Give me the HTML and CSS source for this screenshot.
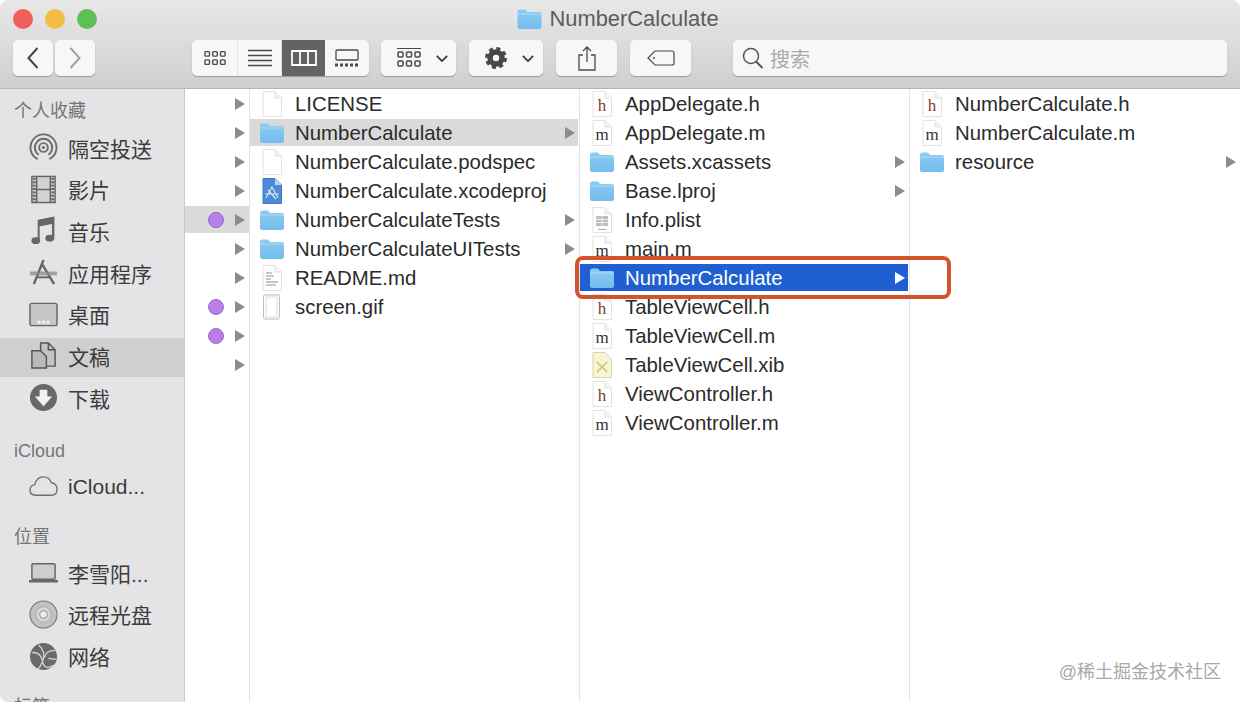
FILE: index.html
```html
<!DOCTYPE html>
<html lang="zh-CN">
<head>
    <meta charset="UTF-8">
    <title>NumberCalculate</title>
    <link rel="stylesheet" href="styles.css">
</head>
<body>
    <svg class="sprites" width="0" height="0">
        <defs>
            <linearGradient id="folderFill" x1="0" y1="0" x2="0" y2="1">
                <stop offset="0" stop-color="#8ccbf3"/>
                <stop offset="1" stop-color="#74bdec"/>
            </linearGradient>
            <symbol id="i-folder" viewBox="0 0 24 20">
                <path d="M0 3Q0 .5 2.500 .5H8L10 3H22Q24 3 24 5V18Q24 20 22 20H2Q0 20 0 18Z" fill="url(#folderFill)"/>
                <path d="M0 5H24" stroke="#a9dcfa" stroke-width="1"/>
            </symbol>
            <symbol id="i-page" viewBox="0 0 20 26">
                <path d="M1 .5H13L19.500 7V25.500H1Z" fill="#fff" stroke="#e2e2e2"/>
                <path d="M13 .5V7H19.500" fill="#f3f3f3" stroke="#e2e2e2"/>
            </symbol>
            <symbol id="i-hfile" viewBox="0 0 20 26">
                <use href="#i-page" width="20" height="26"/>
                <text class="code-letter code-h" x="10" y="20">h</text>
            </symbol>
            <symbol id="i-mfile" viewBox="0 0 20 26">
                <use href="#i-page" width="20" height="26"/>
                <text class="code-letter" x="10" y="20">m</text>
            </symbol>
            <symbol id="i-readme" viewBox="0 0 20 26">
                <use href="#i-page" width="20" height="26"/>
                <path d="M4 8H10M4 11H12M4 14H9M4 17H16M4 20H14" stroke="#8d8d8d" stroke-width="1"/>
            </symbol>
            <symbol id="i-gif" viewBox="0 0 20 26">
                <rect x="1.500" y="1" width="16" height="24" rx="1.500" fill="#fff" stroke="#bdbdbd"/>
                <rect x="4" y="3" width="11" height="20" fill="#fff" stroke="#dcdcdc"/>
            </symbol>
            <symbol id="i-plist" viewBox="0 0 20 26">
                <use href="#i-page" width="20" height="26"/>
                <rect x="4" y="9" width="12" height="10" fill="#bdbdbd"/>
                <path d="M4 12.500H16M4 15.500H16M10 9V19" stroke="#eee"/>
                <path d="M6 22.500H14" stroke="#aaa"/>
            </symbol>
            <symbol id="i-xib" viewBox="0 0 20 26">
                <path d="M1 .5H13L19.500 7V25.500H1Z" fill="#f7f5d8" stroke="#d9d7a8"/>
                <path d="M5 10L15 20M15 10L5 20" stroke="#c9bf52" stroke-width="1.300"/>
            </symbol>
            <symbol id="i-xcode" viewBox="0 0 20 26">
                <path d="M1 .5H13L19.500 7V25.500H1Z" fill="#4d8ad6" stroke="#3f78c2"/>
                <path d="M13 .5V7H19.500" fill="#bcd6f2"/>
                <path d="M4 20L10 9L16 20M3 16H17M6 12L14 21" fill="none" stroke="#d6e6f8" stroke-width="1.200"/>
            </symbol>
            <symbol id="i-arrow" viewBox="0 0 10 12">
                <path d="M0 0L10 6L0 12Z"/>
            </symbol>
            <symbol id="i-chevron" viewBox="0 0 14 8">
                <path d="M1 1L7 7L13 1" fill="none" stroke="#3e3e3e" stroke-width="2.200"/>
            </symbol>
            <symbol id="i-grid" viewBox="0 0 24 16">
                <g fill="none" stroke="#4a4a4a" stroke-width="1.500">
                    <rect x="1" y="1" width="5" height="5" rx="1"/><rect x="9.500" y="1" width="5" height="5" rx="1"/><rect x="18" y="1" width="5" height="5" rx="1"/>
                    <rect x="1" y="10" width="5" height="5" rx="1"/><rect x="9.500" y="10" width="5" height="5" rx="1"/><rect x="18" y="10" width="5" height="5" rx="1"/>
                </g>
            </symbol>
        </defs>
    </svg>

    <div class="window">
        <header class="titlebar">
            <div class="title-row">
                <div class="lights">
                    <span class="light light-red"></span>
                    <span class="light light-yellow"></span>
                    <span class="light light-green"></span>
                </div>
                <div class="title">
                    <svg class="title-icon"><use href="#i-folder"/></svg>
                    <span>NumberCalculate</span>
                </div>
            </div>
            <div class="toolbar">
                <div class="nav-group">
                    <button class="tool nav-btn">
                        <svg width="12" height="22" viewBox="0 0 12 22"><path d="M10.500 1L1.500 11L10.500 21" fill="none" stroke="#444" stroke-width="2"/></svg>
                    </button>
                    <button class="tool nav-btn">
                        <svg width="12" height="22" viewBox="0 0 12 22"><path d="M1.500 1L10.500 11L1.500 21" fill="none" stroke="#a0a0a0" stroke-width="2"/></svg>
                    </button>
                </div>
                <div class="view-group">
                    <button class="view-btn">
                        <svg width="22" height="16"><use href="#i-grid"/></svg>
                    </button>
                    <button class="view-btn">
                        <svg width="24" height="18" viewBox="0 0 24 18"><path d="M0 1.500H24M0 6.500H24M0 11.500H24M0 16.500H24" stroke="#4a4a4a" stroke-width="1.300"/></svg>
                    </button>
                    <button class="view-btn view-active">
                        <svg width="26" height="16" viewBox="0 0 26 16"><path d="M1 1H25V15H1ZM9 1V15M17 1V15" fill="none" stroke="#fff" stroke-width="1.800"/></svg>
                    </button>
                    <button class="view-btn">
                        <svg width="24" height="18" viewBox="0 0 24 18"><rect x="1" y="1" width="22" height="10" rx="1" fill="none" stroke="#4a4a4a" stroke-width="1.300"/><path d="M0 16H24" stroke="#4a4a4a" stroke-width="3" stroke-dasharray="3 2"/></svg>
                    </button>
                </div>
                <button class="tool arrange-btn">
                    <svg width="24" height="20" viewBox="0 0 24 20"><path d="M0 .5H24" stroke="#4a4a4a"/><use href="#i-grid" y="3" width="24" height="16"/></svg>
                    <svg width="12" height="7"><use href="#i-chevron"/></svg>
                </button>
                <button class="tool gear-btn">
                    <svg width="22" height="22" viewBox="0 0 24 24"><circle cx="12" cy="12" r="6.500" fill="none" stroke="#484848" stroke-width="6"/><circle cx="12" cy="12" r="10" fill="none" stroke="#484848" stroke-width="4" stroke-dasharray="4.300 3.550"/></svg>
                    <svg width="12" height="7"><use href="#i-chevron"/></svg>
                </button>
                <button class="tool share-btn">
                    <svg width="20" height="25" viewBox="0 0 20 25"><path d="M6 9H2V24H18V9H14M10 16V1.500M6 5L10 1L14 5" fill="none" stroke="#4a4a4a" stroke-width="1.300"/></svg>
                </button>
                <button class="tool tag-btn">
                    <svg width="28" height="16" viewBox="0 0 28 16"><path d="M8 1H25Q27 1 27 3V13Q27 15 25 15H8L1 8Z" fill="none" stroke="#4a4a4a" stroke-width="1.200"/><circle cx="7" cy="8" r="1" fill="#4a4a4a"/></svg>
                </button>
                <div class="search">
                    <svg width="22" height="22" viewBox="0 0 22 22"><circle cx="9" cy="9" r="7.500" fill="none" stroke="#555" stroke-width="1.500"/><path d="M14 14.500L20.500 21" stroke="#555" stroke-width="2"/></svg>
                    <span>搜索</span>
                </div>
            </div>
        </header>

        <main class="content">
            <nav class="sidebar">
                <h4 class="side-title">个人收藏</h4>
                <ul class="side-list">
                    <li class="side-item">
                        <svg class="side-icon" viewBox="0 0 30 30"><g fill="none" stroke="#6e6e6e" stroke-width="2"><path d="M9 27A13.500 13.500 0 1 1 21 27"/><path d="M10 22.500A9 9 0 1 1 20 22.500"/><circle cx="15" cy="15" r="4.500"/></g><circle cx="15" cy="15" r="1.600" fill="#6e6e6e"/></svg>
                        隔空投送
                    </li>
                    <li class="side-item">
                        <svg class="side-icon" viewBox="0 0 30 30"><rect x="3" y="1.500" width="24" height="27" fill="#d2d2d2" stroke="#666" stroke-width="1.500"/><path d="M8 2V28M22 2V28M8 15H22" stroke="#666" stroke-width="1.500"/><path d="M5.500 3V28M24.500 3V28" stroke="#666" stroke-width="3" stroke-dasharray="2 1.500"/></svg>
                        影片
                    </li>
                    <li class="side-item">
                        <svg class="side-icon" viewBox="0 0 30 30"><path d="M10 5L25 2V22.500" fill="none" stroke="#666" stroke-width="2.500"/><path d="M10 5V26M10 5L25 2V7L10 10Z" fill="#666" stroke="#666" stroke-width="2"/><ellipse cx="7" cy="25.500" rx="4.500" ry="3.500" fill="#666"/><ellipse cx="21.500" cy="23" rx="4.500" ry="3.500" fill="#666"/></svg>
                        音乐
                    </li>
                    <li class="side-item">
                        <svg class="side-icon" viewBox="0 0 30 30"><path d="M15 2L5 27M14 7L26 27" fill="none" stroke="#666" stroke-width="2.500"/><path d="M1 14H29V18H1Z" fill="#8a8a8a" opacity=".75"/><path d="M9 20H21" stroke="#666" stroke-width="2"/></svg>
                        应用程序
                    </li>
                    <li class="side-item">
                        <svg class="side-icon" viewBox="0 0 30 30"><rect x="1" y="3.500" width="28" height="23" rx="2" fill="#c6c6c6" stroke="#666" stroke-width="1.500"/><path d="M9 23H21" stroke="#f2f2f2" stroke-width="3" stroke-dasharray="3 1.500"/></svg>
                        桌面
                    </li>
                    <li class="side-item side-active">
                        <svg class="side-icon" viewBox="0 0 30 30"><path d="M12 2H20L27 9V26H12Z" fill="#c4c4c4" stroke="#555" stroke-width="1.500"/><path d="M20 2V9H27" fill="none" stroke="#555" stroke-width="1.500"/><path d="M3 10H12L18 16V28H3Z" fill="#b9b9b9" stroke="#555" stroke-width="1.500"/></svg>
                        文稿
                    </li>
                    <li class="side-item">
                        <svg class="side-icon" viewBox="0 0 30 30"><circle cx="15" cy="15" r="14" fill="#696969"/><path d="M11 7H19V14H24L15 24L6 14H11Z" fill="#f2f2f2"/></svg>
                        下载
                    </li>
                </ul>

                <h4 class="side-title side-title-icloud">iCloud</h4>
                <ul class="side-list">
                    <li class="side-item">
                        <svg class="side-icon" viewBox="0 0 30 30"><path d="M7 24Q1 24 1 18.500Q1 14 6 13Q8 5 15 5Q21 5 23 11Q29 12 29 18Q29 24 23 24Z" fill="none" stroke="#6e6e6e" stroke-width="1.400"/></svg>
                        iCloud...
                    </li>
                </ul>

                <h4 class="side-title">位置</h4>
                <ul class="side-list">
                    <li class="side-item">
                        <svg class="side-icon" viewBox="0 0 30 30"><rect x="3" y="6" width="24" height="16" rx="1" fill="#cdcdcd" stroke="#666" stroke-width="1.500"/><path d="M0 24H30" stroke="#666" stroke-width="2.500"/></svg>
                        李雪阳...
                    </li>
                    <li class="side-item">
                        <svg class="side-icon" viewBox="0 0 30 30"><circle cx="15" cy="15" r="14" fill="#c2c2c2" stroke="#7a7a7a" stroke-width="1.200"/><circle cx="15" cy="15" r="8" fill="#d6d6d6" stroke="#a8a8a8"/><circle cx="15" cy="15" r="4" fill="#ececec" stroke="#8a8a8a"/></svg>
                        远程光盘
                    </li>
                    <li class="side-item">
                        <svg class="side-icon" viewBox="0 0 30 30"><circle cx="15" cy="15" r="14" fill="#6a6a6a"/><path d="M3 11Q12 10 14 20T26 24M10 3Q18 10 14 20T8 27M27 9Q18 8 16 16M20 17L28 18" fill="none" stroke="#d2d2d2" stroke-width="1.400"/></svg>
                        网络
                    </li>
                </ul>

                <h4 class="side-title">标签</h4>
            </nav>

            <section class="column column-narrow">
                <div class="row"><svg class="row-arrow"><use href="#i-arrow"/></svg></div>
                <div class="row"><svg class="row-arrow"><use href="#i-arrow"/></svg></div>
                <div class="row"><svg class="row-arrow"><use href="#i-arrow"/></svg></div>
                <div class="row"><svg class="row-arrow"><use href="#i-arrow"/></svg></div>
                <div class="row row-grey"><span class="dot"></span><svg class="row-arrow"><use href="#i-arrow"/></svg></div>
                <div class="row"><svg class="row-arrow"><use href="#i-arrow"/></svg></div>
                <div class="row"><svg class="row-arrow"><use href="#i-arrow"/></svg></div>
                <div class="row"><span class="dot"></span><svg class="row-arrow"><use href="#i-arrow"/></svg></div>
                <div class="row"><span class="dot"></span><svg class="row-arrow"><use href="#i-arrow"/></svg></div>
                <div class="row"><svg class="row-arrow"><use href="#i-arrow"/></svg></div>
            </section>

            <section class="column">
                <div class="row"><span class="row-icon"><svg class="file-icon"><use href="#i-page"/></svg></span><span class="row-name">LICENSE</span></div>
                <div class="row row-grey"><span class="row-icon"><svg class="folder-icon"><use href="#i-folder"/></svg></span><span class="row-name">NumberCalculate</span><svg class="row-arrow"><use href="#i-arrow"/></svg></div>
                <div class="row"><span class="row-icon"><svg class="file-icon"><use href="#i-page"/></svg></span><span class="row-name">NumberCalculate.podspec</span></div>
                <div class="row"><span class="row-icon"><svg class="file-icon"><use href="#i-xcode"/></svg></span><span class="row-name">NumberCalculate.xcodeproj</span></div>
                <div class="row"><span class="row-icon"><svg class="folder-icon"><use href="#i-folder"/></svg></span><span class="row-name">NumberCalculateTests</span><svg class="row-arrow"><use href="#i-arrow"/></svg></div>
                <div class="row"><span class="row-icon"><svg class="folder-icon"><use href="#i-folder"/></svg></span><span class="row-name">NumberCalculateUITests</span><svg class="row-arrow"><use href="#i-arrow"/></svg></div>
                <div class="row"><span class="row-icon"><svg class="file-icon"><use href="#i-readme"/></svg></span><span class="row-name">README.md</span></div>
                <div class="row"><span class="row-icon"><svg class="file-icon"><use href="#i-gif"/></svg></span><span class="row-name">screen.gif</span></div>
            </section>

            <section class="column">
                <div class="row"><span class="row-icon"><svg class="file-icon"><use href="#i-hfile"/></svg></span><span class="row-name">AppDelegate.h</span></div>
                <div class="row"><span class="row-icon"><svg class="file-icon"><use href="#i-mfile"/></svg></span><span class="row-name">AppDelegate.m</span></div>
                <div class="row"><span class="row-icon"><svg class="folder-icon"><use href="#i-folder"/></svg></span><span class="row-name">Assets.xcassets</span><svg class="row-arrow"><use href="#i-arrow"/></svg></div>
                <div class="row"><span class="row-icon"><svg class="folder-icon"><use href="#i-folder"/></svg></span><span class="row-name">Base.lproj</span><svg class="row-arrow"><use href="#i-arrow"/></svg></div>
                <div class="row"><span class="row-icon"><svg class="file-icon"><use href="#i-plist"/></svg></span><span class="row-name">Info.plist</span></div>
                <div class="row"><span class="row-icon"><svg class="file-icon"><use href="#i-mfile"/></svg></span><span class="row-name">main.m</span></div>
                <div class="row row-blue"><span class="row-icon"><svg class="folder-icon"><use href="#i-folder"/></svg></span><span class="row-name">NumberCalculate</span><svg class="row-arrow"><use href="#i-arrow"/></svg></div>
                <div class="row"><span class="row-icon"><svg class="file-icon"><use href="#i-hfile"/></svg></span><span class="row-name">TableViewCell.h</span></div>
                <div class="row"><span class="row-icon"><svg class="file-icon"><use href="#i-mfile"/></svg></span><span class="row-name">TableViewCell.m</span></div>
                <div class="row"><span class="row-icon"><svg class="file-icon"><use href="#i-xib"/></svg></span><span class="row-name">TableViewCell.xib</span></div>
                <div class="row"><span class="row-icon"><svg class="file-icon"><use href="#i-hfile"/></svg></span><span class="row-name">ViewController.h</span></div>
                <div class="row"><span class="row-icon"><svg class="file-icon"><use href="#i-mfile"/></svg></span><span class="row-name">ViewController.m</span></div>
            </section>

            <section class="column column-last">
                <div class="row"><span class="row-icon"><svg class="file-icon"><use href="#i-hfile"/></svg></span><span class="row-name">NumberCalculate.h</span></div>
                <div class="row"><span class="row-icon"><svg class="file-icon"><use href="#i-mfile"/></svg></span><span class="row-name">NumberCalculate.m</span></div>
                <div class="row"><span class="row-icon"><svg class="folder-icon"><use href="#i-folder"/></svg></span><span class="row-name">resource</span><svg class="row-arrow"><use href="#i-arrow"/></svg></div>
            </section>

            <div class="callout"></div>
            <div class="watermark">@稀土掘金技术社区</div>
        </main>
    </div>
</body>
</html>
```

FILE: styles.css
```css
* {
    box-sizing: border-box;
}
body {
    margin: 0;
    background: #fff;
    font-family: "Liberation Sans", "Noto Sans CJK SC", sans-serif;
    overflow: hidden;
}
.sprites {
    position: absolute;
}
.window {
    width: 1240px;
    height: 702px;
    display: flex;
    flex-direction: column;
    border-radius: 8px;
    overflow: hidden;
    background: #fff;
}

/* title bar + toolbar */
.titlebar {
    height: 89px;
    flex: none;
    background: linear-gradient(#e8e8e8, #cfcfcf);
    border-bottom: 1px solid #b4b4b4;
}
.title-row {
    height: 40px;
    display: grid;
    grid-template-columns: 1fr auto 1fr;
    align-items: center;
    padding: 0 17px 3px 13px;
}
.lights {
    display: flex;
    gap: 12px;
}
.light {
    width: 20px;
    height: 20px;
    border-radius: 50%;
}
.light-red {
    background: #f0605a;
}
.light-yellow {
    background: #f4bc42;
}
.light-green {
    background: #5cc052;
}
.title {
    grid-column: 2;
    display: flex;
    align-items: center;
    gap: 7px;
    font-size: 21.9px;
    color: #5c5c5c;
}
.title-icon {
    width: 25px;
    height: 20px;
}
.toolbar {
    display: flex;
    align-items: stretch;
    height: 36px;
    padding: 0 13px;
}
.tool, .view-group, .search {
    background: #f7f7f7;
    border-radius: 5px;
    box-shadow: 0 1px 1px rgba(0,0,0,0.28);
}
button {
    border: none;
    padding: 0;
    display: flex;
    align-items: center;
    justify-content: center;
}
.nav-group {
    display: flex;
    gap: 2px;
    margin-right: 97px;
}
.nav-btn {
    width: 40px;
}
.view-group {
    display: flex;
    width: 177px;
    overflow: hidden;
}
.view-btn {
    width: 44px;
    background: none;
    border-right: 1px solid #e2e2e2;
}
.view-btn:first-child {
    width: 46px;
}
.view-btn:last-child {
    border-right: none;
}
.view-active {
    background: #636363;
    border-right: none;
    width: 43px;
}
.arrange-btn {
    width: 75px;
    margin-left: 12px;
    justify-content: flex-start;
    padding-left: 16px;
    gap: 15px;
}
.gear-btn {
    width: 74px;
    margin-left: 13px;
    justify-content: flex-start;
    padding-left: 16px;
    gap: 15px;
}
.share-btn {
    width: 61px;
    margin-left: 13px;
}
.tag-btn {
    width: 61px;
    margin-left: 13px;
}
.search {
    flex: 1;
    margin-left: 42px;
    display: flex;
    align-items: center;
    gap: 6px;
    padding-left: 9px;
    font-size: 20px;
    color: #a9a9a9;
}

/* main area */
.content {
    flex: 1;
    display: flex;
    min-height: 0;
    position: relative;
}
.sidebar {
    width: 185px;
    flex: none;
    padding-top: 10px;
    background: #e4e4e6;
    border-right: 1px solid #c9c9c9;
    overflow: hidden;
}
.side-title {
    margin: 17px 0 6px 14px;
    height: 24px;
    line-height: 24px;
    font-size: 18px;
    font-weight: normal;
    color: #757575;
}
.side-title:first-child {
    margin-top: 0;
    margin-bottom: 7px;
}
.side-title-icloud {
    margin-top: 20px;
    margin-bottom: 6px;
}
.side-list {
    list-style: none;
    margin: 0;
    padding: 0;
    display: flex;
    flex-direction: column;
    gap: 2.7px;
}
.side-item {
    height: 39px;
    display: flex;
    align-items: center;
    gap: 10px;
    padding: 0 0 4px 29px;
    font-size: 21px;
    color: #3c3c3c;
}
.side-active {
    background: #cfcfd1;
}
.side-icon {
    width: 29px;
    height: 29px;
}

/* file columns */
.column {
    width: 330px;
    flex: none;
    padding-top: 1px;
    border-left: 1px solid #e4e4e4;
}
.column-narrow {
    width: 64px;
    border-left: none;
}
.column-last {
    flex: 1;
}
.row {
    height: 27px;
    margin: 0 1px 2px 0;
    display: flex;
    align-items: center;
    padding-right: 3px;
    font-size: 20.4px;
    color: #2b2b2b;
}
.column-narrow .row {
    justify-content: flex-end;
    margin-right: 0;
    padding-right: 4px;
}
.row-grey {
    background: #dadada;
}
.row-blue {
    background: #1f5fd1;
    color: #fff;
}
.row-icon {
    width: 24px;
    margin: 0 11px 0 10px;
    display: flex;
    justify-content: center;
    align-items: center;
    flex: none;
}
.row-name {
    flex: 1;
    padding-top: 2px;
    white-space: nowrap;
}
.row-arrow {
    width: 10px;
    height: 12px;
    flex: none;
    fill: #8c8c8c;
}
.row-blue .row-arrow {
    fill: #fff;
}
.folder-icon {
    width: 24px;
    height: 20px;
}
.file-icon {
    width: 20px;
    height: 26px;
}
.code-letter {
    font-family: "Liberation Serif", serif;
    font-size: 17px;
    text-anchor: middle;
    fill: #333;
}
.code-h {
    fill: #7b3b33;
}
.dot {
    width: 16px;
    height: 16px;
    margin-right: 11px;
    border-radius: 50%;
    background: #b67fe9;
    border: 1px solid #9c66d2;
}

/* annotations on top of the shot */
.callout {
    position: absolute;
    left: 575px;
    top: 167px;
    width: 376px;
    height: 43px;
    border: 4px solid #d5532b;
    border-radius: 8px;
}
.watermark {
    position: absolute;
    right: 19px;
    bottom: 19px;
    font-size: 18px;
    color: #a8a8a8;
}
```
